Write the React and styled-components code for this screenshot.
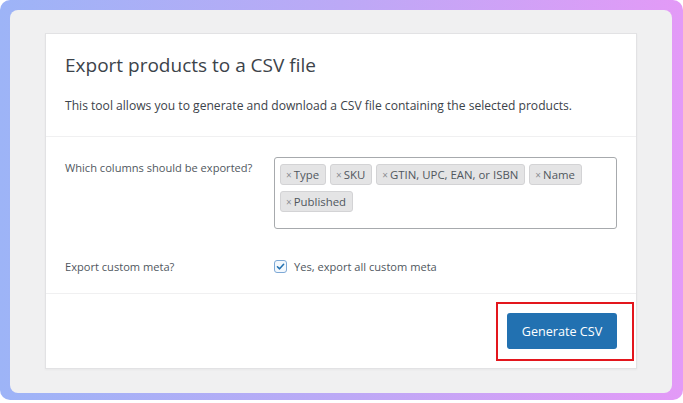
import React from "react";
import styled, { createGlobalStyle } from "styled-components";

const GlobalStyle = createGlobalStyle`
  body {
    margin: 0;
    background: #ffffff;
    font-family: "Open Sans", "Noto Sans", sans-serif;
  }
`;

const Frame = styled.div`
  width: 683px;
  height: 400px;
  box-sizing: border-box;
  padding: 10px 11px 7px 10px;
  border-radius: 10px;
  background: linear-gradient(90deg, #9db4f7 0%, #bca9f6 50%, #e39af7 100%);
`;

const Panel = styled.div`
  height: 100%;
  box-sizing: border-box;
  padding: 23px 35px 24px 35px;
  background: #f0f0f1;
  border-radius: 8px;
`;

const Card = styled.div`
  background: #ffffff;
  border: 1px solid #e2e2e4;
  box-shadow: 0 1px 2px rgba(0, 0, 0, 0.04);
  height: 336px;
  box-sizing: border-box;
  display: flex;
  flex-direction: column;
`;

const Header = styled.header`
  padding: 17px 20px 0 19px;
  height: 103px;
  box-sizing: border-box;
  border-bottom: 1px solid #f0f0f1;
`;

const Title = styled.h2`
  margin: 0;
  font-size: 19px;
  line-height: 28px;
  font-weight: 400;
  color: #3c434a;
`;

const Intro = styled.p`
  margin: 17px 0 0;
  font-size: 12.1px;
  line-height: 20px;
  color: #3c434a;
`;

const Form = styled.section`
  padding: 20px 19px 0 19px;
  height: 157px;
  box-sizing: border-box;
  border-bottom: 1px solid #f0f0f1;
  display: grid;
  grid-template-columns: 209px 1fr;
  grid-auto-rows: auto;
  row-gap: 11px;
  align-items: start;
`;

const Label = styled.label`
  font-size: 11.1px;
  line-height: 20px;
  color: #50575e;
  padding-top: ${({ top }) => top || 0}px;
`;

const TagBox = styled.div`
  height: 72px;
  box-sizing: border-box;
  border: 1px solid #a7aaad;
  border-radius: 3px;
  padding: 6px 5px;
  display: flex;
  flex-wrap: wrap;
  align-content: flex-start;
  column-gap: 4px;
  row-gap: 6px;
`;

const Tag = styled.span`
  display: inline-flex;
  align-items: center;
  height: 21px;
  box-sizing: border-box;
  padding: 0 6px 0 5px;
  background: #e4e4e5;
  border: 1px solid #d3d3d5;
  border-radius: 3px;
  font-size: 11.4px;
  color: #50575e;
`;

const Remove = styled.span`
  font-size: 10px;
  color: #8c8f94;
  margin-right: 2px;
`;

const CheckRow = styled.label`
  display: flex;
  align-items: center;
  gap: 7px;
  font-size: 11.1px;
  line-height: 20px;
  color: #50575e;
`;

const Box = styled.span`
  width: 11px;
  height: 11px;
  border: 1px solid #7ea9d6;
  border-radius: 3px;
  background: #f3f8fd;
  display: inline-flex;
  align-items: center;
  justify-content: center;
`;

const Footer = styled.footer`
  flex: 1;
  display: flex;
  justify-content: flex-end;
  align-items: flex-start;
  padding: 19px 19px 0 0;
`;

const Highlight = styled.div`
  position: relative;
  &::after {
    content: "";
    position: absolute;
    left: -11px;
    top: -11px;
    right: -17px;
    bottom: -12px;
    border: 2px solid #e3161d;
    pointer-events: none;
  }
`;

const Button = styled.button`
  width: 110px;
  height: 36px;
  border: none;
  border-radius: 3px;
  background: #2271b1;
  color: #ffffff;
  font-family: inherit;
  font-size: 12.6px;
  cursor: pointer;
`;

const columns = ["Type", "SKU", "GTIN, UPC, EAN, or ISBN", "Name", "Published"];

export default function App() {
  return (
    <>
      <GlobalStyle />
      <Frame>
        <Panel>
          <Card>
            <Header>
              <Title>Export products to a CSV file</Title>
              <Intro>
                This tool allows you to generate and download a CSV file
                containing the selected products.
              </Intro>
            </Header>
            <Form>
              <Label top={1}>Which columns should be exported?</Label>
              <TagBox>
                {columns.map((c) => (
                  <Tag key={c}>
                    <Remove>×</Remove>
                    {c}
                  </Tag>
                ))}
              </TagBox>
              <Label>Export custom meta?</Label>
              <CheckRow>
                <Box>
                  <svg width="9" height="9" viewBox="0 0 10 10">
                    <path
                      d="M1.6 5.3 L4 7.6 L8.5 2.5"
                      fill="none"
                      stroke="#2271b1"
                      strokeWidth="1.7"
                      strokeLinecap="round"
                      strokeLinejoin="round"
                    />
                  </svg>
                </Box>
                Yes, export all custom meta
              </CheckRow>
            </Form>
            <Footer>
              <Highlight>
                <Button>Generate CSV</Button>
              </Highlight>
            </Footer>
          </Card>
        </Panel>
      </Frame>
    </>
  );
}
